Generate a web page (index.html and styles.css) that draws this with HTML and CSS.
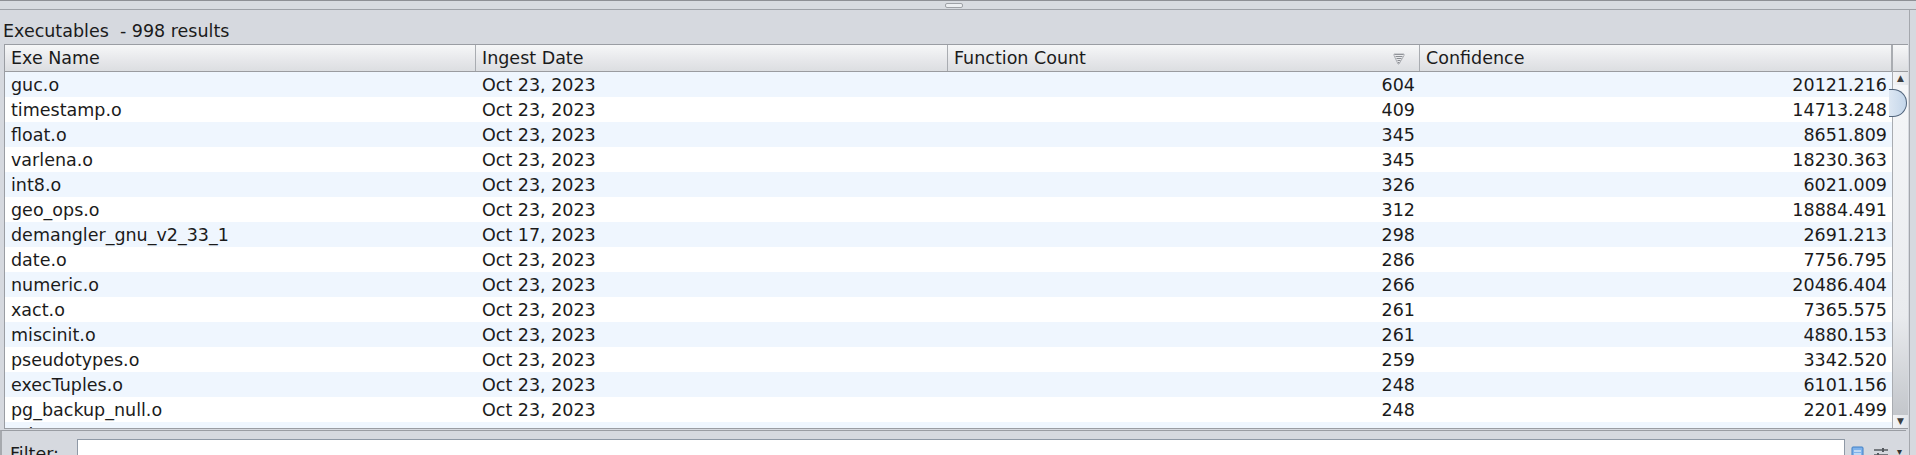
FILE: index.html
```html
<!DOCTYPE html>
<html>
<head>
<meta charset="utf-8">
<link rel="stylesheet" href="styles.css">
</head>
<body>
<div class="app">
  <div class="split-bar"><span class="grip"></span></div>
  <div class="title">Executables&nbsp;&nbsp;- 998 results</div>
  <div class="table">
    <div class="main">
      <div class="header">
        <div class="hcell">Exe Name</div>
        <div class="hcell">Ingest Date</div>
        <div class="hcell sorted">Function Count
          <svg class="sort-icon" width="12" height="12" viewBox="0 0 12 12">
            <path d="M1.5 1.5h9M2.5 3.5h7M3.5 5.5h5M4.5 7.5h3M5 9.5h1.5" stroke="#8a8d92" stroke-width="1" fill="none"/>
            <path d="M1 1h10v1.5L6 11H5L1 2.5z" fill="none" stroke="#9da0a5" stroke-width="0.8"/>
          </svg>
        </div>
        <div class="hcell">Confidence</div>
      </div>
      <div class="rows">
        <div class="row"><span>guc.o</span><span>Oct 23, 2023</span><span class="num">604</span><span class="num">20121.216</span></div>
        <div class="row"><span>timestamp.o</span><span>Oct 23, 2023</span><span class="num">409</span><span class="num">14713.248</span></div>
        <div class="row"><span>float.o</span><span>Oct 23, 2023</span><span class="num">345</span><span class="num">8651.809</span></div>
        <div class="row"><span>varlena.o</span><span>Oct 23, 2023</span><span class="num">345</span><span class="num">18230.363</span></div>
        <div class="row"><span>int8.o</span><span>Oct 23, 2023</span><span class="num">326</span><span class="num">6021.009</span></div>
        <div class="row"><span>geo_ops.o</span><span>Oct 23, 2023</span><span class="num">312</span><span class="num">18884.491</span></div>
        <div class="row"><span>demangler_gnu_v2_33_1</span><span>Oct 17, 2023</span><span class="num">298</span><span class="num">2691.213</span></div>
        <div class="row"><span>date.o</span><span>Oct 23, 2023</span><span class="num">286</span><span class="num">7756.795</span></div>
        <div class="row"><span>numeric.o</span><span>Oct 23, 2023</span><span class="num">266</span><span class="num">20486.404</span></div>
        <div class="row"><span>xact.o</span><span>Oct 23, 2023</span><span class="num">261</span><span class="num">7365.575</span></div>
        <div class="row"><span>miscinit.o</span><span>Oct 23, 2023</span><span class="num">261</span><span class="num">4880.153</span></div>
        <div class="row"><span>pseudotypes.o</span><span>Oct 23, 2023</span><span class="num">259</span><span class="num">3342.520</span></div>
        <div class="row"><span>execTuples.o</span><span>Oct 23, 2023</span><span class="num">248</span><span class="num">6101.156</span></div>
        <div class="row"><span>pg_backup_null.o</span><span>Oct 23, 2023</span><span class="num">248</span><span class="num">2201.499</span></div>
        <div class="row"><span>rel.o</span><span>Oct 23, 2023</span><span class="num">245</span><span class="num">3330.305</span></div>
      </div>
    </div>
    <div class="vscroll">
      <div class="corner"></div>
      <div class="track">
        <div class="arrow up">&#9650;</div>
        <div class="thumb-area"><div class="thumb"></div></div>
        <div class="arrow down">&#9660;</div>
      </div>
    </div>
  </div>
  <div class="filter-panel">
    <span class="filter-label">Filter:</span>
    <div class="filter-field"></div>
    <div class="filter-icons">
      <svg width="14" height="14" viewBox="0 0 14 14"><rect x="1" y="1" width="11" height="12" rx="1" fill="#7fb2ea" stroke="#3f7fc6"/><path d="M3 5h7M3 8h7" stroke="#ffffff" stroke-width="1.2"/></svg>
      <svg width="16" height="14" viewBox="0 0 16 14"><path d="M1 4h14M1 9h14" stroke="#55595f" stroke-width="1.4"/><rect x="9" y="2" width="2" height="4" fill="#55595f"/><rect x="4" y="7" width="2" height="4" fill="#55595f"/></svg>
      <span class="drop">&#9662;</span>
    </div>
  </div>
</div>
</body>
</html>
```

FILE: styles.css
```css
html, body {
  margin: 0;
  padding: 0;
  width: 1916px;
  height: 455px;
  overflow: hidden;
  background: #d6d9df;
}

.app {
  font-family: "DejaVu Sans", sans-serif;
  font-size: 17.5px;
  color: #1b1b1b;
  display: flex;
  flex-direction: column;
  height: 455px;
  border-right: 1px solid #a4a7ad;
  box-sizing: border-box;
  width: 1910px;
}

.split-bar {
  flex: none;
  height: 10px;
  border-top: 1px solid #8e9095;
  border-bottom: 1px solid #9fa2a8;
  background: #d8dbe0;
  display: flex;
  justify-content: center;
  align-items: center;
  width: 1916px;
  box-sizing: border-box;
}

.grip {
  width: 16px;
  height: 3px;
  border: 1px solid #9ea1a6;
  border-radius: 2px;
  background: #eceef1;
  margin-left: -8px;
}

.title {
  flex: none;
  height: 34px;
  line-height: 43px;
  padding-left: 3px;
  box-sizing: border-box;
  white-space: pre;
  overflow: hidden;
}

.table {
  flex: none;
  margin-left: 4px;
  width: 1904px;
  height: 385px;
  border: 1px solid #9a9da3;
  border-right: none;
  display: flex;
  background: #ffffff;
  box-sizing: border-box;
}

.main {
  width: 1887px;
  display: flex;
  flex-direction: column;
  overflow: hidden;
}

.header {
  flex: none;
  display: grid;
  grid-template-columns: 471px 472px 472px 472px;
  height: 27px;
  background: linear-gradient(#f6f7f8, #e6e7ea 60%, #dcdee1);
  border-bottom: 1px solid #9a9ca0;
  box-sizing: border-box;
}

.hcell {
  border-right: 1px solid #a9acb1;
  padding-left: 6px;
  line-height: 26px;
  display: flex;
  align-items: center;
  justify-content: space-between;
  padding-right: 14px;
}

.sort-icon {
  margin-top: 2px;
}

.rows {
  flex: 1;
  min-height: 0;
  overflow: hidden;
}

.row {
  display: grid;
  grid-template-columns: 471px 472px 472px 472px;
  height: 25px;
  line-height: 27px;
  overflow: hidden;
}

.row:nth-child(odd) {
  background: #eff6fe;
}

.row span {
  padding: 0 5px 0 6px;
  white-space: nowrap;
}

.row span.num {
  text-align: right;
}

.vscroll {
  width: 16px;
  display: flex;
  flex-direction: column;
  border-left: 1px solid #a9acb1;
  box-sizing: border-box;
}

.corner {
  height: 27px;
  background: linear-gradient(#f6f7f8, #e6e7ea 60%, #dcdee1);
  border-bottom: 1px solid #9a9ca0;
  box-sizing: border-box;
  flex: none;
}

.track {
  flex: 1;
  display: flex;
  flex-direction: column;
  background: linear-gradient(90deg, #f3f4f6, #e4e6ea);
}

.arrow {
  height: 13px;
  font-size: 9px;
  line-height: 13px;
  text-align: center;
  color: #3b3e42;
  flex: none;
}

.thumb-area {
  flex: 1;
  position: relative;
  background: linear-gradient(180deg, #f5f6f8 0%, #e9ebee 70%, #c3c6cb 100%);
}

.thumb {
  position: absolute;
  top: 4px;
  left: -4px;
  width: 18px;
  height: 28px;
  border-radius: 0 14px 14px 0 / 0 14px 14px 0;
  border: 1px solid #51647c;
  border-left: none;
  background: linear-gradient(90deg, #dde7f3, #c4d6ea);
  box-sizing: border-box;
}

.filter-panel {
  flex: 1;
  min-height: 0;
  margin-top: 1px;
  border-top: 1px solid #9a9da3;
  border-left: 2px solid #a6a9ae;
  display: flex;
  align-items: flex-start;
  padding-top: 8px;
  width: 1906px;
  box-sizing: border-box;
}

.filter-label {
  padding-left: 8px;
  width: 75px;
  box-sizing: border-box;
  line-height: 26px;
  margin-top: 2px;
  flex: none;
}

.filter-field {
  flex: none;
  width: 1768px;
  height: 26px;
  background: #ffffff;
  border: 1px solid #8f99a6;
  box-sizing: border-box;
}

.filter-icons {
  display: flex;
  gap: 8px;
  padding-left: 6px;
  padding-top: 7px;
  align-items: flex-start;
}

.drop {
  font-size: 10px;
  color: #333;
}
```
